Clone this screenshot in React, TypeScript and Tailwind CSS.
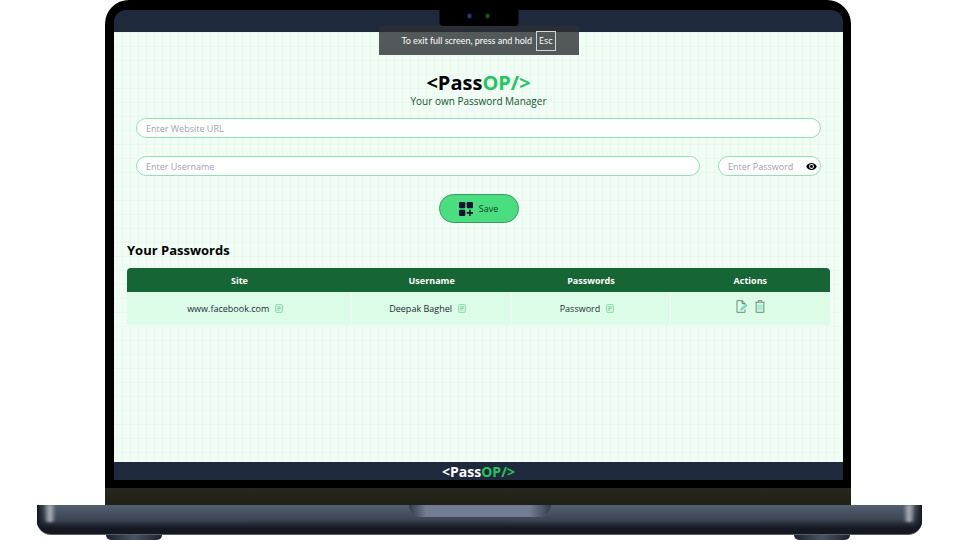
import { useState } from "react";

const fontStack = "font-['Open_Sans','Noto_Sans',sans-serif]";

function Brand({ light = false }: { light?: boolean }) {
  return (
    <>
      <span className={light ? "text-white" : "text-black"}>&lt;Pass</span>
      <span className="text-[#22c55e]">OP/&gt;</span>
    </>
  );
}

function EyeIcon() {
  return (
    <svg viewBox="0 0 24 16" className="h-[7px] w-[11px]" aria-hidden="true">
      <path
        fillRule="evenodd"
        d="M12 0C6.500 0 2 3.400 0 8c2 4.600 6.500 8 12 8s10-3.400 12-8c-2-4.600-6.500-8-12-8Zm0 13.500A5.500 5.500 0 1 1 12 2.500a5.500 5.500 0 0 1 0 11Z"
        fill="#000"
      />
      <circle cx="12" cy="8" r="3.400" fill="#000" />
    </svg>
  );
}

function AddIcon() {
  return (
    <svg viewBox="0 0 14 14" className="size-[14px]" fill="#121331" aria-hidden="true">
      <rect x="0" y="0" width="6.300" height="6.300" rx="1.200" />
      <rect x="7.700" y="0" width="6.300" height="6.300" rx="1.200" />
      <rect x="0" y="7.700" width="6.300" height="6.300" rx="1.200" />
      <path d="M10.100 7.800h1.600v2.300H14v1.600h-2.300V14h-1.600v-2.300H7.800v-1.600h2.300Z" />
    </svg>
  );
}

function CopyIcon() {
  return (
    <svg viewBox="0 0 8 9" className="h-[9px] w-[8px]" fill="none" aria-hidden="true">
      <rect x="0.600" y="0.600" width="6.800" height="7.800" rx="0.900" fill="#d0f7de" stroke="#8bd9aa" />
      <path d="M2.200 2.900h3.600M2.200 4.400h3.600M2.200 5.900h2" stroke="#63c58a" strokeWidth="0.700" />
    </svg>
  );
}

function EditIcon() {
  return (
    <svg viewBox="0 0 12 13" className="h-[13px] w-[12px]" fill="none" aria-hidden="true">
      <path d="M9 9.500v2.800H1V.700h5.300L9 3.600v1" stroke="#6b8a83" strokeWidth="1" />
      <path d="M6.200.700v3H9" stroke="#4a6663" strokeWidth="0.900" />
      <path d="m4.200 10.600.9-2.600L9.900 4.100l1.500 1.500-4.700 4.200Z" fill="#74dcc2" stroke="#6fd0ba" strokeWidth="0.400" />
    </svg>
  );
}

function TrashIcon() {
  return (
    <svg viewBox="0 0 10 13" className="h-[13px] w-[10px]" fill="none" aria-hidden="true">
      <path d="M1.200 2.600v9.700h7.600V2.600" stroke="#6b8a83" strokeWidth="1" />
      <path d="M.3 2.200h9.400M3.300 2V.700h3.400V2" stroke="#6b8a83" strokeWidth="1" />
      <path d="M3.200 4.300v6.200M5 4.300v6.200M6.800 4.300v6.200" stroke="#7fdcc2" strokeWidth="0.900" />
    </svg>
  );
}

const rows = [{ site: "www.facebook.com", username: "Deepak Baghel", password: "Password" }];

const field =
  "block h-5 rounded-full border border-[#8fe3b0] bg-white text-[9px] text-gray-800 placeholder:text-[#9ca3af] outline-none";

const cell = "h-[33px] border-r border-[#f0fdf4] text-center last:border-r-0";

function CopyCell({ value }: { value: string }) {
  return (
    <td className={`${cell} pr-2`}>
      <div className="flex items-center justify-center gap-[6px]">
        <span>{value}</span>
        <button type="button" aria-label={`Copy ${value}`}>
          <CopyIcon />
        </button>
      </div>
    </td>
  );
}

function Manager() {
  const [visible, setVisible] = useState(false);
  return (
    <main className="min-h-[430px] bg-[#f0fdf4] bg-[linear-gradient(to_right,#00000005_1px,transparent_1px),linear-gradient(to_bottom,#00000004_1px,transparent_1px)] bg-[size:8px_14px] px-[13px] pt-[39px]">
      <header className="text-center">
        <h1 className="text-[20px] leading-[24px] font-bold">
          <Brand />
        </h1>
        <p className="text-[10px] leading-[13px] text-[#14532d]">Your own Password Manager</p>
      </header>

      <form className="mt-[10px] flex flex-col items-center gap-[18px] px-[9px]" onSubmit={(e) => e.preventDefault()}>
        <input className={`${field} w-full px-[9px]`} type="text" aria-label="Website URL" placeholder="Enter Website URL" />
        <div className="flex w-full gap-[18px]">
          <input className={`${field} min-w-0 flex-1 px-[9px]`} type="text" aria-label="Username" placeholder="Enter Username" />
          <div className="relative w-[103px]">
            <input
              className={`${field} w-full pr-4 pl-[9px]`}
              type={visible ? "text" : "password"}
              aria-label="Password"
              placeholder="Enter Password"
            />
            <button
              type="button"
              aria-label="Show password"
              className="absolute inset-y-0 right-1 flex items-center"
              onClick={() => setVisible(!visible)}
            >
              <EyeIcon />
            </button>
          </div>
        </div>
        <button
          type="submit"
          className="flex h-[29px] w-[80px] items-center justify-center gap-[6px] rounded-full border border-[#3f9a64] bg-[#4ade80] text-[9px] text-[#14401f]"
        >
          <AddIcon />
          Save
        </button>
      </form>

      <section>
        <h2 className="mt-[18px] text-[13px] leading-[18px] font-bold text-black">Your Passwords</h2>
        <table className="mt-[9px] w-full table-fixed overflow-hidden rounded-t-[4px] text-[9px] leading-[13px] text-gray-800">
          <thead className="bg-[#166534] text-white">
            <tr>
              <th className="w-[32%] pt-[6px] pb-[5px] font-bold">Site</th>
              <th className="pt-[6px] pb-[5px] font-bold">Username</th>
              <th className="pt-[6px] pb-[5px] font-bold">Passwords</th>
              <th className="pt-[6px] pb-[5px] font-bold">Actions</th>
            </tr>
          </thead>
          <tbody className="bg-[#dcfce7]">
            {rows.map((row) => (
              <tr key={row.site}>
                <CopyCell value={row.site} />
                <CopyCell value={row.username} />
                <CopyCell value={row.password} />
                <td className={`${cell} pb-1`}>
                  <div className="flex items-center justify-center gap-[7px]">
                    <button type="button" aria-label="Edit">
                      <EditIcon />
                    </button>
                    <button type="button" aria-label="Delete">
                      <TrashIcon />
                    </button>
                  </div>
                </td>
              </tr>
            ))}
          </tbody>
        </table>
      </section>
    </main>
  );
}

function Notch() {
  return (
    <div className="absolute top-0 left-1/2 flex h-4 w-[79px] -translate-x-1/2 justify-center gap-[14px] rounded-b-[4px] bg-black pt-1">
      <span className="size-1 rounded-full bg-[#233c78] ring-1 ring-[#0a0f1c]" />
      <span className="size-1 rounded-full bg-[#1a5c0c] ring-1 ring-[#081606]" />
    </div>
  );
}

function FullScreenHint() {
  return (
    <div className="absolute top-4 left-1/2 flex h-[29px] w-[200px] -translate-x-1/2 items-center justify-center gap-1 bg-[#2c2f35]/80 font-['Lato','Open_Sans',sans-serif] text-[9px] whitespace-nowrap text-white">
      <span>To exit full screen, press and hold</span>
      <kbd className={`${fontStack} flex h-5 items-center border border-gray-300 px-[2px]`}>Esc</kbd>
    </div>
  );
}

function Foot() {
  return (
    <div className="h-[5px] w-[56px] rounded-b-[5px] bg-linear-to-r from-[#1c222c] via-[#4a5564] to-[#1c222c]" />
  );
}

export default function App() {
  return (
    <div className={`${fontStack} min-h-screen overflow-hidden bg-white`}>
      <div className="mr-[109px] ml-[105px] overflow-hidden rounded-t-[24px] bg-black">
        <div className="pt-[10px] pr-2 pb-2 pl-[9px]">
          <div className="relative overflow-hidden rounded-t-[12px]">
            <nav className="h-[22px] bg-[#1e293b]" />
            <Manager />
            <footer className="bg-[#1e293b] pt-px text-center text-[14px] leading-[17px] font-bold">
              <Brand light />
            </footer>
            <FullScreenHint />
            <Notch />
          </div>
        </div>
        <div className="h-[17px] bg-linear-to-b from-[#29271c] to-[#202018]" />
      </div>

      <div className="mr-[38px] ml-[37px]">
        <div className="flex h-[30px] items-start justify-between overflow-hidden rounded-b-[14px] border-b border-[#5d5c66] bg-linear-to-b from-[#536070] via-[#3c4655] to-[#141821] to-80%">
          <div className="flex h-full bg-linear-to-r from-[#12161e] to-transparent to-50%">
            <div className="ml-[7px] h-[17px] w-3 rounded-b-[4px] bg-linear-to-r from-transparent via-[#b0b3b7] to-transparent blur-[1px]" />
          </div>
          <div className="h-3 w-[142px] rounded-b-[12px] bg-linear-to-r from-[#343c4b] via-[#727c92] via-12% to-[#727c92]">
            <div className="h-full w-full rounded-b-[12px] bg-linear-to-r from-transparent from-85% to-[#343c4b]" />
          </div>
          <div className="flex h-full bg-linear-to-l from-[#12161e] to-transparent to-50%">
            <div className="mr-[7px] h-[17px] w-3 rounded-b-[4px] bg-linear-to-r from-transparent via-[#b0b3b7] to-transparent blur-[1px]" />
          </div>
        </div>
        <div className="mr-[72px] ml-[69px] flex justify-between">
          <Foot />
          <Foot />
        </div>
      </div>
    </div>
  );
}
